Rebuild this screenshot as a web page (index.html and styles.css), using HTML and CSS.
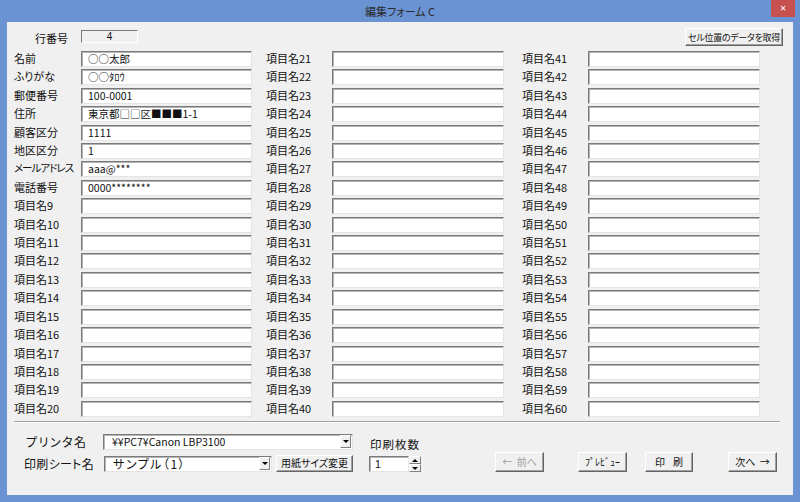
FILE: index.html
```html
<!DOCTYPE html>
<html lang="ja">
<head>
<meta charset="utf-8">
<title>編集フォーム C</title>
<link rel="stylesheet" href="styles.css">
</head>
<body>
<div class="window">
  <div class="titlebar">
    <span></span>
    <span class="title">編集フォーム C</span>
    <span class="close">✕</span>
  </div>
  <div class="client">
    <div class="topbar">
      <span class="rowno-label">行番号</span>
      <span class="rowno">4</span>
      <button class="btn getbtn">セル位置のデータを取得</button>
    </div>
    <div class="fields">
      <div class="col c1">
        <div class="row"><span class="lbl">名前</span><span class="tb">○○太郎</span></div>
        <div class="row"><span class="lbl">ふりがな</span><span class="tb">○○ﾀﾛｳ</span></div>
        <div class="row"><span class="lbl">郵便番号</span><span class="tb">100-0001</span></div>
        <div class="row"><span class="lbl">住所</span><span class="tb">東京都□□区■■■1-1</span></div>
        <div class="row"><span class="lbl">顧客区分</span><span class="tb">1111</span></div>
        <div class="row"><span class="lbl">地区区分</span><span class="tb">1</span></div>
        <div class="row"><span class="lbl narrow-lbl">メールアドレス</span><span class="tb">aaa@***</span></div>
        <div class="row"><span class="lbl">電話番号</span><span class="tb">0000********</span></div>
        <div class="row"><span class="lbl">項目名9</span><span class="tb"></span></div>
        <div class="row"><span class="lbl">項目名10</span><span class="tb"></span></div>
        <div class="row"><span class="lbl">項目名11</span><span class="tb"></span></div>
        <div class="row"><span class="lbl">項目名12</span><span class="tb"></span></div>
        <div class="row"><span class="lbl">項目名13</span><span class="tb"></span></div>
        <div class="row"><span class="lbl">項目名14</span><span class="tb"></span></div>
        <div class="row"><span class="lbl">項目名15</span><span class="tb"></span></div>
        <div class="row"><span class="lbl">項目名16</span><span class="tb"></span></div>
        <div class="row"><span class="lbl">項目名17</span><span class="tb"></span></div>
        <div class="row"><span class="lbl">項目名18</span><span class="tb"></span></div>
        <div class="row"><span class="lbl">項目名19</span><span class="tb"></span></div>
        <div class="row"><span class="lbl">項目名20</span><span class="tb"></span></div>
      </div>
      <div class="col c2">
        <div class="row"><span class="lbl">項目名21</span><span class="tb"></span></div>
        <div class="row"><span class="lbl">項目名22</span><span class="tb"></span></div>
        <div class="row"><span class="lbl">項目名23</span><span class="tb"></span></div>
        <div class="row"><span class="lbl">項目名24</span><span class="tb"></span></div>
        <div class="row"><span class="lbl">項目名25</span><span class="tb"></span></div>
        <div class="row"><span class="lbl">項目名26</span><span class="tb"></span></div>
        <div class="row"><span class="lbl">項目名27</span><span class="tb"></span></div>
        <div class="row"><span class="lbl">項目名28</span><span class="tb"></span></div>
        <div class="row"><span class="lbl">項目名29</span><span class="tb"></span></div>
        <div class="row"><span class="lbl">項目名30</span><span class="tb"></span></div>
        <div class="row"><span class="lbl">項目名31</span><span class="tb"></span></div>
        <div class="row"><span class="lbl">項目名32</span><span class="tb"></span></div>
        <div class="row"><span class="lbl">項目名33</span><span class="tb"></span></div>
        <div class="row"><span class="lbl">項目名34</span><span class="tb"></span></div>
        <div class="row"><span class="lbl">項目名35</span><span class="tb"></span></div>
        <div class="row"><span class="lbl">項目名36</span><span class="tb"></span></div>
        <div class="row"><span class="lbl">項目名37</span><span class="tb"></span></div>
        <div class="row"><span class="lbl">項目名38</span><span class="tb"></span></div>
        <div class="row"><span class="lbl">項目名39</span><span class="tb"></span></div>
        <div class="row"><span class="lbl">項目名40</span><span class="tb"></span></div>
      </div>
      <div class="col c3">
        <div class="row"><span class="lbl">項目名41</span><span class="tb"></span></div>
        <div class="row"><span class="lbl">項目名42</span><span class="tb"></span></div>
        <div class="row"><span class="lbl">項目名43</span><span class="tb"></span></div>
        <div class="row"><span class="lbl">項目名44</span><span class="tb"></span></div>
        <div class="row"><span class="lbl">項目名45</span><span class="tb"></span></div>
        <div class="row"><span class="lbl">項目名46</span><span class="tb"></span></div>
        <div class="row"><span class="lbl">項目名47</span><span class="tb"></span></div>
        <div class="row"><span class="lbl">項目名48</span><span class="tb"></span></div>
        <div class="row"><span class="lbl">項目名49</span><span class="tb"></span></div>
        <div class="row"><span class="lbl">項目名50</span><span class="tb"></span></div>
        <div class="row"><span class="lbl">項目名51</span><span class="tb"></span></div>
        <div class="row"><span class="lbl">項目名52</span><span class="tb"></span></div>
        <div class="row"><span class="lbl">項目名53</span><span class="tb"></span></div>
        <div class="row"><span class="lbl">項目名54</span><span class="tb"></span></div>
        <div class="row"><span class="lbl">項目名55</span><span class="tb"></span></div>
        <div class="row"><span class="lbl">項目名56</span><span class="tb"></span></div>
        <div class="row"><span class="lbl">項目名57</span><span class="tb"></span></div>
        <div class="row"><span class="lbl">項目名58</span><span class="tb"></span></div>
        <div class="row"><span class="lbl">項目名59</span><span class="tb"></span></div>
        <div class="row"><span class="lbl">項目名60</span><span class="tb"></span></div>
      </div>
    </div>
    <div class="sep"></div>
    <div class="bottom">
      <div class="print-fields">
        <div class="prow">
          <span class="plabel printer">プリンタ名</span>
          <span class="combo wide"><span class="ctext">¥¥PC7¥Canon LBP3100</span><span class="drop"></span></span>
        </div>
        <div class="prow">
          <span class="plabel sheet">印刷シート名</span>
          <span class="combo narrow"><span class="ctext big">サンプル（1）</span><span class="drop"></span></span>
          <button class="btn paper">用紙サイズ変更</button>
        </div>
      </div>
      <div class="copies">
        <div class="clabel">印刷枚数</div>
        <div class="spin">
          <span class="tb spintb">1</span>
          <span class="spinbtns"><span class="sb up"></span><span class="sb down"></span></span>
        </div>
      </div>
      <div class="navbtns">
        <button class="btn nav prev" disabled>←&nbsp;&nbsp;前へ</button>
        <button class="btn nav preview">ﾌﾟﾚﾋﾞｭｰ</button>
        <button class="btn nav print"><span class="spaced">印</span>刷</button>
        <button class="btn nav next">次へ&nbsp;&nbsp;→</button>
      </div>
    </div>
  </div>
</div>
</body>
</html>
```
FILE: styles.css
```css
* { box-sizing: border-box; }
html, body { margin: 0; padding: 0; }
body {
  width: 800px;
  height: 502px;
  overflow: hidden;
  font-family: "Noto Sans CJK JP", "Noto Sans", sans-serif;
  font-feature-settings: "palt";
  color: #111;
}
.window {
  width: 800px;
  height: 502px;
  background: #6a93d3;
  display: flex;
  flex-direction: column;
  padding: 0 7px 7px;
}
.titlebar {
  height: 22px;
  margin: 0 -7px;
  padding: 0 5px;
  display: grid;
  grid-template-columns: 1fr auto 1fr;
}
.title {
  font-size: 11px;
  line-height: 22px;
  color: #2a2a2a;
}
.close {
  justify-self: end;
  width: 24px;
  height: 17px;
  background: #c75050;
  color: #fff;
  font-size: 8px;
  line-height: 17px;
  text-align: center;
  font-family: "DejaVu Sans", sans-serif;
  font-weight: bold;
}
.client {
  flex: 1;
  background: #f0f0f0;
  display: flex;
  flex-direction: column;
}
.topbar {
  height: 29px;
  display: flex;
  align-items: flex-start;
  padding-left: 7px;
}
.rowno-label {
  width: 67px;
  text-align: right;
  padding-right: 13px;
  font-size: 11px;
  line-height: 14px;
  margin-top: 9px;
}
.rowno {
  width: 57px;
  height: 13px;
  margin-top: 8px;
  border: 1px solid;
  border-color: #7a7a7a #ffffff #ffffff #7a7a7a;
  background: #f0f0f0;
  font-size: 10px;
  line-height: 11px;
  text-align: center;
  font-family: "Liberation Sans", sans-serif;
}
.btn {
  font-family: "Noto Sans CJK JP", "Noto Sans", sans-serif;
  font-feature-settings: "palt";
  background: #f0f0f0;
  border: 1px solid;
  border-color: #ffffff #646464 #646464 #ffffff;
  box-shadow: inset -1px -1px 0 #a0a0a0;
  padding: 0;
  color: #111;
  white-space: nowrap;
}
.getbtn {
  margin-left: auto;
  margin-right: 10px;
  margin-top: 6px;
  width: 98px;
  height: 18px;
  font-size: 9px;
  letter-spacing: -0.3px;
  line-height: 15px;
}
.fields {
  display: grid;
  grid-template-columns: 252px 256px 256px;
  padding-left: 7px;
}
.col {
  display: grid;
  grid-template-rows: repeat(20, 16px);
  row-gap: 2.42px;
}
.row {
  display: flex;
  align-items: flex-start;
}
.lbl {
  width: 66px;
  flex: none;
  font-size: 11px;
  line-height: 14px;
  white-space: nowrap;
}
.c1 .lbl { width: 67px; }
.c1 .lbl.narrow-lbl { letter-spacing: -1px; font-size: 10.5px; }
.tb {
  display: block;
  width: 172px;
  height: 16px;
  background: #fff;
  border: 1px solid;
  border-color: #7a7a7a #e4e4e4 #e4e4e4 #7a7a7a;
  box-shadow: inset 1px 1px 0 #b4b4b4;
  font-size: 10.5px;
  line-height: 14px;
  padding-left: 6px;
  white-space: nowrap;
  overflow: hidden;
}
.c1 .tb { width: 171px; }
.sep {
  margin: 4px 13px 0 7px;
  height: 2px;
  border-top: 1px solid #a0a0a0;
  border-bottom: 1px solid #ffffff;
}
.bottom {
  display: flex;
  align-items: flex-start;
  padding-top: 11px;
}
.print-fields {
  display: flex;
  flex-direction: column;
  gap: 6px;
}
.prow {
  display: flex;
  align-items: flex-start;
  height: 16px;
}
.plabel {
  font-size: 12px;
  line-height: 16px;
  white-space: nowrap;
}
.plabel.printer { width: 96px; padding-left: 19px; letter-spacing: 1.5px; }
.plabel.sheet { width: 97px; padding-left: 17px; letter-spacing: 0.3px; }
.combo {
  display: flex;
  align-items: center;
  height: 16px;
  background: #fff;
  border: 1px solid;
  border-color: #7a7a7a #e4e4e4 #e4e4e4 #7a7a7a;
  box-shadow: inset 1px 1px 0 #b4b4b4;
  padding: 0 1px 0 8px;
}
.combo.wide { width: 250px; }
.combo.narrow { width: 168px; }
.ctext {
  flex: 1;
  font-size: 10.5px;
  line-height: 14px;
  white-space: nowrap;
  font-feature-settings: normal;
}
.ctext.big { font-size: 12px; letter-spacing: 1.5px; font-feature-settings: "palt"; }
.drop {
  width: 11px;
  height: 13px;
  background: #f0f0f0;
  border: 1px solid;
  border-color: #ffffff #808080 #808080 #ffffff;
  position: relative;
}
.drop::after {
  content: "";
  position: absolute;
  left: 2px;
  top: 4px;
  border-left: 3px solid transparent;
  border-right: 3px solid transparent;
  border-top: 3px solid #000;
}
.paper {
  margin-left: 4px;
  width: 77px;
  height: 17px;
  margin-top: -1px;
  font-size: 10px;
  line-height: 14px;
}
.copies {
  margin-left: 16px;
  display: flex;
  flex-direction: column;
}
.clabel {
  font-size: 11.5px;
  line-height: 16px;
  margin-top: 2px;
  padding-left: 1px;
  letter-spacing: 1px;
}
.spin {
  margin-top: 4px;
  display: flex;
}
.spintb {
  width: 40px;
  font-family: "Liberation Sans", sans-serif;
  padding-left: 5px;
}
.spinbtns {
  width: 12px;
  height: 16px;
  display: flex;
  flex-direction: column;
}
.sb {
  flex: 1;
  background: #f0f0f0;
  border: 1px solid;
  border-color: #ffffff #808080 #808080 #ffffff;
  position: relative;
}
.sb::after {
  content: "";
  position: absolute;
  left: 2px;
  top: 2px;
  border-left: 3px solid transparent;
  border-right: 3px solid transparent;
}
.sb.up::after { border-bottom: 3px solid #000; }
.sb.down::after { border-top: 3px solid #000; }
.navbtns {
  display: flex;
  margin-top: 18px;
  margin-left: 74px;
}
.nav {
  width: 49px;
  height: 20px;
  font-size: 10px;
  line-height: 16px;
}
.nav .spaced { margin-right: 8px; }
.nav.prev { color: #a0a0a0; }
.nav.preview { margin-left: 34px; }
.nav.print { margin-left: 18px; width: 48px; }
.nav.next { margin-left: 35px; }
```
